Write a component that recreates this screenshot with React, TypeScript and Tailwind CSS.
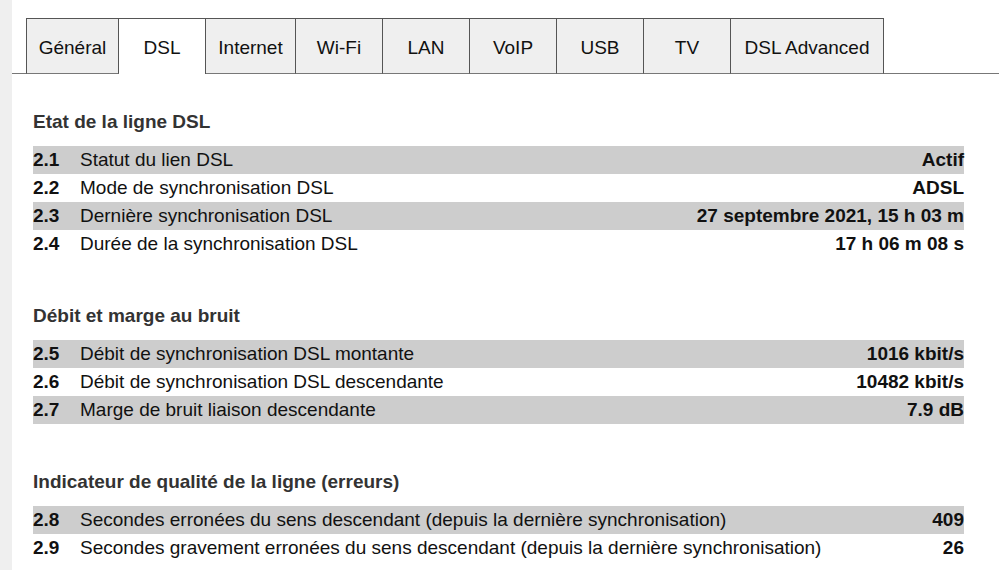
import React from 'react';

const tabs = [
  { label: 'Général', w: 'w-[93px]' },
  { label: 'DSL', w: 'w-[87px]', active: true },
  { label: 'Internet', w: 'w-[90px]' },
  { label: 'Wi-Fi', w: 'w-[87px]' },
  { label: 'LAN', w: 'w-[87px]' },
  { label: 'VoIP', w: 'w-[87px]' },
  { label: 'USB', w: 'w-[87px]' },
  { label: 'TV', w: 'w-[87px]' },
  { label: 'DSL Advanced', w: 'w-[153px]' },
];

const sections = [
  {
    title: 'Etat de la ligne DSL',
    rows: [
      ['2.1', 'Statut du lien DSL', 'Actif'],
      ['2.2', 'Mode de synchronisation DSL', 'ADSL'],
      ['2.3', 'Dernière synchronisation DSL', '27 septembre 2021, 15 h 03 m'],
      ['2.4', 'Durée de la synchronisation DSL', '17 h 06 m 08 s'],
    ],
  },
  {
    title: 'Débit et marge au bruit',
    rows: [
      ['2.5', 'Débit de synchronisation DSL montante', '1016 kbit/s'],
      ['2.6', 'Débit de synchronisation DSL descendante', '10482 kbit/s'],
      ['2.7', 'Marge de bruit liaison descendante', '7.9 dB'],
    ],
  },
  {
    title: 'Indicateur de qualité de la ligne (erreurs)',
    rows: [
      ['2.8', 'Secondes erronées du sens descendant (depuis la dernière synchronisation)', '409'],
      ['2.9', 'Secondes gravement erronées du sens descendant (depuis la dernière synchronisation)', '26'],
    ],
  },
];

export default function App() {
  return (
    <div className="flex min-h-[570px] w-[999px] bg-white text-[19px] text-[#111] font-['Liberation_Sans',Arial,sans-serif]">
      {/* left strip */}
      <div className="w-[12px] shrink-0 bg-[#efefef]" />

      <div className="flex-1">
        {/* tab bar */}
        <div className="mt-[18px] flex h-[56px]">
          <div className="w-[14px] border-b border-[#777]" />
          {tabs.map((t, i) => (
            <div
              key={t.label}
              className={`${t.w} flex items-center justify-center border-t border-r border-[#555] ${
                i === 0 ? 'border-l' : ''
              } ${t.active ? 'bg-white' : 'bg-[#efefef] border-b border-b-[#777]'}`}
            >
              <span className="pt-[4px]">{t.label}</span>
            </div>
          ))}
          <div className="flex-1 border-b border-[#777]" />
        </div>

        {/* content */}
        <div className="pl-[21px] pr-[35px] pt-[34px]">
          {sections.map((s, si) => (
            <div key={s.title} className={si > 0 ? 'mt-[44px]' : ''}>
              <h3 className="mb-[10px] h-[28px] leading-[28px] font-bold text-[#333]">{s.title}</h3>
              {s.rows.map((r, ri) => (
                <div
                  key={r[0]}
                  className={`flex h-[28px] items-center ${ri % 2 === 0 ? 'bg-[#cdcdcd]' : ''}`}
                >
                  <span className="w-[47px] shrink-0 font-bold">{r[0]}</span>
                  <span className="flex-1 whitespace-nowrap">{r[1]}</span>
                  <span className="font-bold whitespace-nowrap">{r[2]}</span>
                </div>
              ))}
            </div>
          ))}
        </div>
      </div>
    </div>
  );
}
